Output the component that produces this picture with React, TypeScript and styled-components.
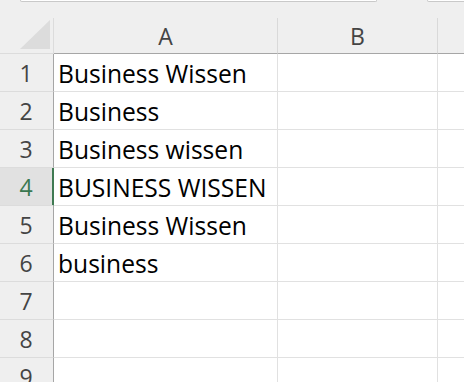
import React from 'react';
import styled, { createGlobalStyle } from 'styled-components';

const GlobalStyle = createGlobalStyle`
  html, body {
    margin: 0;
    padding: 0;
    background: #efefef;
    overflow: hidden;
  }
  body {
    font-family: 'Open Sans', 'Noto Sans', 'Liberation Sans', sans-serif;
  }
`;

const Page = styled.div`
  width: 464px;
  height: 382px;
  overflow: hidden;
  background: #efefef;
  display: flex;
  flex-direction: column;
`;

const TopStrip = styled.div`
  flex: 0 0 18px;
  height: 18px;
  display: flex;
  align-items: flex-start;
  gap: 50px;
  padding-left: 20px;
`;

const FieldEdge = styled.div<{ $width?: number }>`
  height: 1px;
  width: ${(p) => (p.$width ? `${p.$width}px` : 'auto')};
  flex: ${(p) => (p.$width ? '0 0 auto' : '1')};
  background: #fff;
  border: 1px solid #c9c9c9;
  border-top: none;
  border-radius: 0 0 4px 4px;
  margin-right: ${(p) => (p.$width ? '0' : '-6px')};
`;

const Grid = styled.div`
  flex-shrink: 0;
  display: grid;
  grid-template-columns: 54px 224px 160px 1fr;
  grid-auto-rows: 38px;
  grid-template-rows: 36px;
`;

const Corner = styled.div`
  position: relative;
  background: #efefef;
  border-right: 1px solid #dcdcdc;
  border-bottom: 1px solid #dcdcdc;
  svg {
    position: absolute;
    left: 20px;
    top: 2px;
  }
`;

const ColHeader = styled.div<{ $last?: boolean }>`
  background: #efefef;
  border-right: ${(p) => (p.$last ? 'none' : '1px solid #d9d9d9')};
  border-bottom: 1px solid #a6a6a6;
  display: flex;
  align-items: center;
  justify-content: center;
  font-size: 23px;
  color: #444;
  padding-top: 1px;
`;

const RowHeader = styled.div<{ $active?: boolean }>`
  background: ${(p) => (p.$active ? '#e1e1e1' : '#efefef')};
  border-right: 1px solid ${(p) => (p.$active ? '#3f7a52' : '#a6a6a6')};
  box-shadow: ${(p) => (p.$active ? 'inset -1px 0 0 #3f7a52' : 'none')};
  border-bottom: 1px solid #dcdcdc;
  display: flex;
  align-items: center;
  justify-content: center;
  font-size: 23px;
  color: ${(p) => (p.$active ? '#3a7850' : '#444')};
  padding-right: 1px;
  padding-top: 1px;
`;

const Cell = styled.div<{ $last?: boolean }>`
  background: #fff;
  border-right: ${(p) => (p.$last ? 'none' : '1px solid #e1e1e1')};
  border-bottom: 1px solid #e1e1e1;
  display: flex;
  align-items: center;
  padding: 2px 0 0 4px;
  font-size: 24.6px;
  color: #000;
  white-space: nowrap;
`;

const data = [
  'Business Wissen',
  'Business',
  'Business wissen',
  'BUSINESS WISSEN',
  'Business Wissen',
  'business',
  '',
  '',
  '',
];

export default function App() {
  return (
    <Page>
      <GlobalStyle />
      <TopStrip>
        <FieldEdge $width={355} />
        <FieldEdge />
      </TopStrip>
      <Grid>
        <Corner>
          <svg width="31" height="30" viewBox="0 0 31 30">
            <polygon points="30,0 30,29 0,29" fill="#dcdcdc" />
          </svg>
        </Corner>
        <ColHeader>A</ColHeader>
        <ColHeader>B</ColHeader>
        <ColHeader $last />
        {data.map((text, i) => (
          <React.Fragment key={i}>
            <RowHeader $active={i === 3}>{i + 1}</RowHeader>
            <Cell>{text}</Cell>
            <Cell />
            <Cell $last />
          </React.Fragment>
        ))}
      </Grid>
    </Page>
  );
}
